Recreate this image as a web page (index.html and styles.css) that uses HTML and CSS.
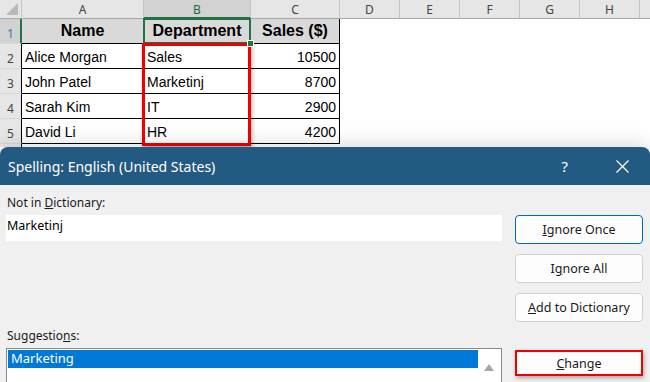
FILE: index.html
```html
<!DOCTYPE html>
<html lang="en">
<head>
    <meta charset="UTF-8">
    <meta name="viewport" content="width=device-width, initial-scale=1.0">
    <title>Spelling</title>
    <link rel="stylesheet" href="styles.css">
</head>
<body>
    <div class="sheet">
        <div class="grid">
            <!-- column headers -->
            <div class="ch corner"><span class="tri"></span></div>
            <div class="ch">A</div>
            <div class="ch ch-sel">B</div>
            <div class="ch">C</div>
            <div class="ch">D</div>
            <div class="ch">E</div>
            <div class="ch">F</div>
            <div class="ch">G</div>
            <div class="ch">H</div>
            <div class="ch ch-last"></div>

            <!-- row 1 -->
            <div class="rh rh-sel">1</div>
            <div class="cell head">Name</div>
            <div class="cell head active">Department</div>
            <div class="cell head">Sales ($)</div>
            <div class="empty"></div><div class="empty"></div><div class="empty"></div><div class="empty"></div><div class="empty"></div><div class="empty"></div>

            <div class="rh">2</div>
            <div class="cell">Alice Morgan</div>
            <div class="cell">Sales</div>
            <div class="cell num">10500</div>
            <div class="empty"></div><div class="empty"></div><div class="empty"></div><div class="empty"></div><div class="empty"></div><div class="empty"></div>

            <div class="rh">3</div>
            <div class="cell">John Patel</div>
            <div class="cell">Marketinj</div>
            <div class="cell num">8700</div>
            <div class="empty"></div><div class="empty"></div><div class="empty"></div><div class="empty"></div><div class="empty"></div><div class="empty"></div>

            <div class="rh">4</div>
            <div class="cell">Sarah Kim</div>
            <div class="cell">IT</div>
            <div class="cell num">2900</div>
            <div class="empty"></div><div class="empty"></div><div class="empty"></div><div class="empty"></div><div class="empty"></div><div class="empty"></div>

            <div class="rh">5</div>
            <div class="cell">David Li</div>
            <div class="cell">HR</div>
            <div class="cell num">4200</div>
            <div class="empty"></div><div class="empty"></div><div class="empty"></div><div class="empty"></div><div class="empty"></div><div class="empty"></div>

            <div class="rh"></div>
        </div>
        <div class="mark"></div>
    </div>

    <div class="dialog">
        <div class="titlebar">
            <span class="title">Spelling: English (United States)</span>
            <span class="help">?</span>
            <svg class="close" width="13" height="13" viewBox="0 0 13 13">
                <path d="M0.5 0.5 L12.5 12.5 M12.5 0.5 L0.5 12.5" stroke="#fff" stroke-width="1.2" fill="none"/>
            </svg>
        </div>
        <div class="dlg-body">
            <div class="left">
                <div class="label">Not in <u>D</u>ictionary:</div>
                <div class="textbox">Marketinj</div>
                <div class="label sugg-label">Suggestio<u>n</u>s:</div>
                <div class="listbox">
                    <div class="item-sel">Marketing</div>
                    <div class="scroll">
                        <svg width="10" height="8" viewBox="0 0 10 8"><path d="M0 8 L5 1 L10 8 Z" fill="#a6a6a6"/></svg>
                    </div>
                </div>
            </div>
            <div class="right">
                <button class="btn btn-focus"><u>I</u>gnore Once</button>
                <button class="btn">I<u>g</u>nore All</button>
                <button class="btn"><u>A</u>dd to Dictionary</button>
                <button class="btn btn-change"><u>C</u>hange</button>
            </div>
        </div>
    </div>
</body>
</html>
```

FILE: styles.css
```css
body{
    margin: 0;
    width: 650px;
    height: 382px;
    overflow: hidden;
    background: #ffffff;
    font-family: "Noto Sans", "Open Sans", sans-serif;
}

/* spreadsheet */
.sheet{
    position: relative;
    height: 147px;
    overflow: hidden;
    background: #fff;
}
.grid{
    display: grid;
    grid-template-columns: 22px 122px 107px 89px 60px 60px 60px 60px 60px 1fr;
    grid-template-rows: 19px 25px 25px 25px 25px 25px 10px;
}
.ch{
    background: #e6e6e6;
    border-right: 1px solid #c4c4c4;
    border-bottom: 1px solid #a8a8a8;
    box-sizing: border-box;
    font-size: 12px;
    color: #444;
    text-align: center;
    line-height: 19px;
}
.ch-sel{
    background: #d2d2d2;
    color: #1d6b3f;
    border-bottom: 2px solid #217346;
}
.ch-last{
    border-right: none;
}
.corner{
    position: relative;
}
.tri{
    position: absolute;
    right: 3px;
    bottom: 3px;
    width: 0;
    height: 0;
    border-left: 12px solid transparent;
    border-bottom: 12px solid #b9b9b9;
}
.rh{
    background: #e6e6e6;
    border-right: 1px solid #000;
    border-bottom: 1px solid #d6d6d6;
    box-sizing: border-box;
    font-size: 12px;
    color: #444;
    padding-left: 7px;
    line-height: 30px;
}
.rh-sel{
    background: #d2d2d2;
    color: #2b7bb9;
    border-right: 2px solid #217346;
}
.cell{
    border-right: 1px solid #000;
    border-bottom: 1px solid #000;
    box-sizing: border-box;
    font-family: "Liberation Sans", Arial, sans-serif;
    font-size: 14px;
    color: #000;
    padding: 4px 3px 0 3px;
    line-height: 18px;
    white-space: nowrap;
}
.head{
    background: #d9d9d9;
    font-weight: bold;
    font-size: 16px;
    text-align: center;
    padding-top: 3px;
}
.active{
    position: relative;
}
.active::after{
    content: "";
    position: absolute;
    left: -1px;
    top: -1px;
    right: -1px;
    bottom: -1px;
    border: 2px solid #217346;
}
.active::before{
    content: "";
    position: absolute;
    right: -4px;
    bottom: -4px;
    width: 5px;
    height: 5px;
    background: #217346;
    border: 1px solid #fff;
    z-index: 2;
}
.num{
    text-align: right;
}
.mark{
    position: absolute;
    left: 142px;
    top: 43px;
    width: 103px;
    height: 97px;
    border: 3px solid #f20000;
    box-shadow: 1px 2px 4px rgba(0,0,0,0.35);
}

/* dialog */
.dialog{
    position: relative;
    z-index: 1;
    height: 240px;
    border-radius: 8px 8px 0 0;
    background: #f0f0f0;
    box-shadow: 0 0 22px rgba(0,0,0,0.18);
    overflow: hidden;
}
.titlebar{
    height: 38px;
    background: #235a82;
    color: #fff;
    display: flex;
    align-items: center;
    padding-left: 8px;
}
.title{
    font-size: 14px;
    flex: 1;
}
.help{
    font-size: 15px;
    margin-right: 48px;
}
.close{
    margin-right: 21px;
}
.dlg-body{
    display: grid;
    grid-template-columns: 496px 128px;
    column-gap: 13px;
    padding: 10px 0 0 6px;
}
.left{
    display: flex;
    flex-direction: column;
}
.label{
    font-size: 12px;
    line-height: 16px;
    color: #1a1a1a;
    padding-left: 1px;
}
.textbox{
    margin-top: 4px;
    height: 26px;
    background: #fff;
    font-size: 12.5px;
    line-height: 22px;
    padding-left: 1px;
    color: #000;
}
.sugg-label{
    margin-top: 87px;
}
.listbox{
    margin-top: 4px;
    height: 60px;
    background: #fff;
    border: 1px solid #8a8a8a;
    padding: 1px;
    display: flex;
    align-items: flex-start;
}
.item-sel{
    flex: 1;
    height: 18px;
    background: #0078d7;
    color: #fff;
    font-size: 13px;
    line-height: 17px;
    padding-left: 3px;
}
.scroll{
    width: 22px;
    text-align: center;
    padding-top: 4px;
}
.right{
    display: flex;
    flex-direction: column;
    gap: 10px;
    padding-top: 20px;
}
.btn{
    height: 29px;
    background: #fdfdfd;
    border: 1px solid #d0d0d0;
    border-radius: 4px;
    font-family: "Noto Sans", "Open Sans", sans-serif;
    font-size: 12.5px;
    color: #1a1a1a;
    padding: 0;
}
.btn-focus{
    border-color: #0067c0;
}
.btn-change{
    margin-top: 18px;
    height: 26px;
    border: 2px solid #f20000;
    border-radius: 0;
    box-shadow: 1px 2px 4px rgba(0,0,0,0.3);
}
```
